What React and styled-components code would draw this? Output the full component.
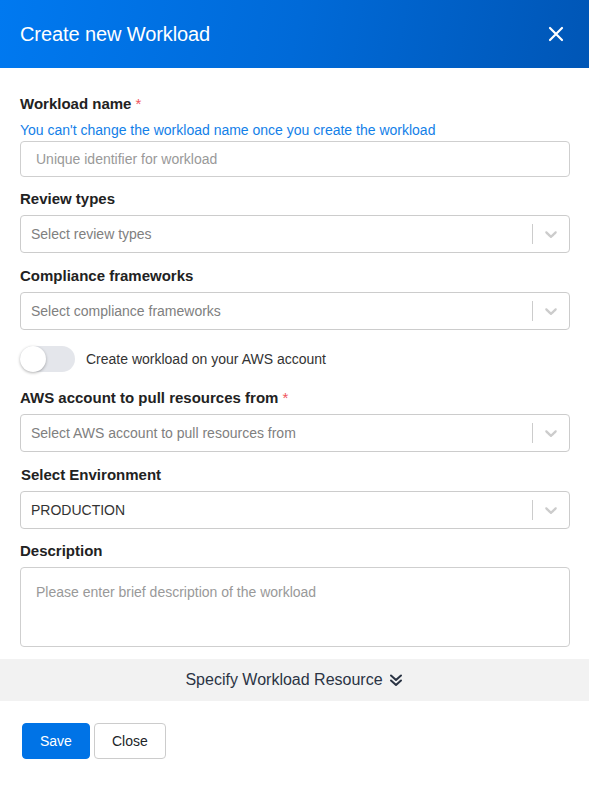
import React from "react";
import styled, { createGlobalStyle } from "styled-components";

const Global = createGlobalStyle`
  html, body { margin: 0; padding: 0; background: #fff; }
  body { font-family: "Liberation Sans", Arial, sans-serif; color: #212529; }
  * { box-sizing: border-box; }
`;

const Modal = styled.div`
  width: 589px;
  min-height: 791px;
  background: #fff;
`;

const Header = styled.div`
  height: 68px;
  background: linear-gradient(100deg, #0079f0 0%, #006ad8 50%, #0056b6 100%);
  display: flex;
  align-items: center;
  justify-content: space-between;
  padding: 0 24px 0 20px;
`;

const Title = styled.h1`
  margin: 0;
  font-size: 20px;
  font-weight: 400;
  color: #fff;
  letter-spacing: -0.1px;
`;

const CloseX = styled.button`
  background: none;
  border: 0;
  padding: 0;
  width: 18px;
  height: 18px;
  display: flex;
  align-items: center;
  justify-content: center;
  cursor: pointer;
`;

const Body = styled.div`
  padding: 26px 19px 0 20px;
`;

const Field = styled.div`
  margin-bottom: ${(p) => p.$mb ?? 13}px;
`;

const Label = styled.div`
  font-size: 15px;
  line-height: 19px;
  font-weight: 700;
  color: #222;
  margin-bottom: 7px;
  padding-left: ${(p) => p.$indent || 0}px;
`;

const Req = styled.span`
  color: #f0545c;
  margin-left: 4px;
  font-weight: 400;
`;

const Helper = styled.div`
  font-size: 14px;
  line-height: 17px;
  color: #1380e8;
  padding-top: 2px;
  margin-bottom: 2px;
`;

const TextInput = styled.div`
  height: 36px;
  border: 1px solid #cfcfcf;
  border-radius: 4px;
  display: flex;
  align-items: center;
  padding: 0 15px;
  font-size: 14px;
  color: #999;
`;

const SelectBox = styled.div`
  height: 38px;
  border: 1px solid #cccccc;
  border-radius: 4px;
  display: flex;
  align-items: center;
`;

const SelectValue = styled.div`
  flex: 1;
  padding: 0 10px;
  font-size: 14px;
  color: ${(p) => (p.$filled ? "#333" : "#808080")};
`;

const Separator = styled.span`
  width: 1px;
  align-self: stretch;
  margin: 8px 0;
  background: #cccccc;
`;

const Indicator = styled.div`
  padding: 8px;
  display: flex;
  color: #cccccc;
`;

const ToggleRow = styled.div`
  display: flex;
  align-items: center;
  gap: 11px;
  margin: 16px 0 16px;
  font-size: 14px;
  color: #333;
`;

const Track = styled.div`
  width: 55px;
  height: 26px;
  border-radius: 13px;
  background: #e4e6eb;
  position: relative;
`;

const Knob = styled.div`
  position: absolute;
  left: 0;
  top: 0;
  width: 26px;
  height: 26px;
  border-radius: 50%;
  background: #fff;
  box-shadow: 0 1px 3px rgba(0, 0, 0, 0.3);
`;

const TextArea = styled.div`
  height: 80px;
  border: 1px solid #cfcfcf;
  border-radius: 4px;
  padding: 16px 15px;
  font-size: 14px;
  color: #999;
`;

const Band = styled.div`
  margin-top: 12px;
  height: 42px;
  background: #f2f2f2;
  display: flex;
  align-items: center;
  justify-content: center;
  gap: 5px;
  font-size: 16px;
  color: #2b3444;
`;

const Footer = styled.div`
  display: flex;
  gap: 4px;
  padding: 22px 22px;
`;

const Button = styled.button`
  height: 36px;
  padding: 0 17px;
  border-radius: 4px;
  font-family: inherit;
  font-size: 14px;
  border: 1px solid ${(p) => (p.$primary ? "#0073e6" : "#cccccc")};
  background: ${(p) => (p.$primary ? "#0073e6" : "#fff")};
  color: ${(p) => (p.$primary ? "#fff" : "#212529")};
`;

const Chevron = () => (
  <svg width="20" height="20" viewBox="0 0 20 20" fill="currentColor">
    <path d="M4.516 7.548c0.436-0.446 1.043-0.481 1.576 0l3.908 3.747 3.908-3.747c0.533-0.481 1.141-0.446 1.574 0 0.436 0.445 0.408 1.197 0 1.615-0.406 0.418-4.695 4.502-4.695 4.502-0.217 0.223-0.502 0.335-0.787 0.335s-0.57-0.112-0.789-0.335c0 0-4.287-4.084-4.695-4.502s-0.436-1.17 0-1.615z" />
  </svg>
);

const Select = ({ value, filled }) => (
  <SelectBox>
    <SelectValue $filled={filled}>{value}</SelectValue>
    <Separator />
    <Indicator>
      <Chevron />
    </Indicator>
  </SelectBox>
);

export default function App() {
  return (
    <>
      <Global />
      <Modal>
        <Header>
          <Title>Create new Workload</Title>
          <CloseX aria-label="close">
            <svg width="16" height="16" viewBox="0 0 16 16">
              <path d="M2 2L14 14M14 2L2 14" stroke="#fff" strokeWidth="2.2" strokeLinecap="round" />
            </svg>
          </CloseX>
        </Header>
        <Body>
          <Field $mb={12}>
            <Label>
              Workload name<Req>*</Req>
            </Label>
            <Helper>You can't change the workload name once you create the workload</Helper>
            <TextInput>Unique identifier for workload</TextInput>
          </Field>
          <Field>
            <Label>Review types</Label>
            <Select value="Select review types" />
          </Field>
          <Field $mb={0}>
            <Label>Compliance frameworks</Label>
            <Select value="Select compliance frameworks" />
          </Field>
          <ToggleRow>
            <Track>
              <Knob />
            </Track>
            Create workload on your AWS account
          </ToggleRow>
          <Field>
            <Label>
              AWS account to pull resources from<Req>*</Req>
            </Label>
            <Select value="Select AWS account to pull resources from" />
          </Field>
          <Field $mb={12}>
            <Label $indent={1}>Select Environment</Label>
            <Select value="PRODUCTION" filled />
          </Field>
          <Field $mb={0}>
            <Label>Description</Label>
            <TextArea>Please enter brief description of the workload</TextArea>
          </Field>
        </Body>
        <Band>
          Specify Workload Resource
          <svg width="16" height="16" viewBox="0 0 16 16" fill="none">
            <path d="M3 3.5L8 8L13 3.5M3 8.5L8 13L13 8.5" stroke="#2b3444" strokeWidth="2" strokeLinecap="round" strokeLinejoin="round" />
          </svg>
        </Band>
        <Footer>
          <Button $primary>Save</Button>
          <Button>Close</Button>
        </Footer>
      </Modal>
    </>
  );
}
